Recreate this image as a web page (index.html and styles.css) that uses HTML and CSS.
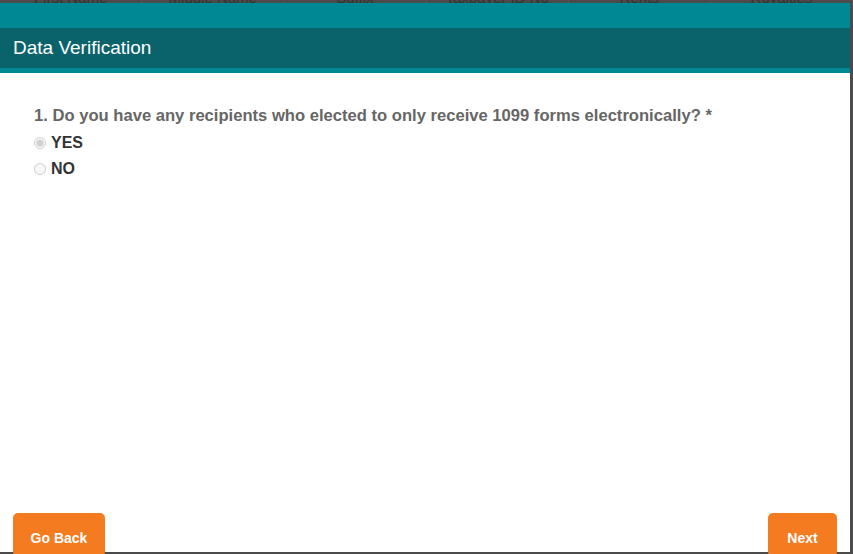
FILE: index.html
```html
<!DOCTYPE html>
<html lang="en">
<head>
  <meta charset="UTF-8">
  <meta name="viewport" content="width=device-width, initial-scale=1.0">
  <title>Data Verification</title>
  <link rel="stylesheet" href="styles.css">
</head>
<body>
  <div class="page">
    <div class="table-head">
      <span>First Name</span>
      <span>Middle Name</span>
      <span>Suffix</span>
      <span>Taxpayer ID No</span>
      <span>Rents</span>
      <span>Royalties</span>
    </div>
  </div>

  <div class="backdrop">
    <div class="modal">
      <div class="modal-top"></div>
      <div class="modal-header">
        <h2>Data Verification</h2>
      </div>
      <div class="modal-body">
        <p class="question">1. Do you have any recipients who elected to only receive 1099 forms electronically? *</p>
        <label class="option">
          <input type="radio" name="electronic" value="yes" checked disabled>
          <span>YES</span>
        </label>
        <label class="option">
          <input type="radio" name="electronic" value="no" disabled>
          <span>NO</span>
        </label>
      </div>
      <div class="modal-footer">
        <button class="btn">Go Back</button>
        <button class="btn">Next</button>
      </div>
    </div>
  </div>
</body>
</html>
```

FILE: styles.css
```css
body {
  margin: 0;
  padding: 0;
  font-family: 'Liberation Sans', Arial, sans-serif;
  background: #4b4b4b;
  overflow: hidden;
}

.page {
  height: 554px;
}

.table-head {
  display: flex;
  margin-top: -11px;
  font-size: 15px;
  color: #333;
}

.table-head span {
  flex: 1;
  text-align: center;
  border-right: 1px solid #555;
}

.backdrop {
  position: fixed;
  top: 3px;
  left: 0;
  width: 850px;
  height: 549px;
}

.modal {
  display: flex;
  flex-direction: column;
  height: 100%;
  background: #ffffff;
}

.modal-top {
  height: 25px;
  background: #008895;
}

.modal-header {
  height: 40px;
  background: #0a636b;
  border-bottom: 5px solid #008895;
  display: flex;
  align-items: center;
  padding: 0 13px;
}

.modal-header h2 {
  margin: 0;
  font-family: 'Liberation Sans', Arial, sans-serif;
  font-weight: normal;
  font-size: 19px;
  color: #ffffff;
}

.modal-body {
  flex: 1;
  padding: 33px 34px 0;
}

.question {
  margin: 0 0 4px;
  font-size: 16.6px;
  font-weight: bold;
  color: #666;
}

.option {
  display: flex;
  align-items: center;
  height: 26px;
  font-size: 16px;
  font-weight: bold;
  color: #333;
}

.option input {
  width: 12px;
  height: 12px;
  margin: 0 5px 0 0;
}

.modal-footer {
  display: flex;
  justify-content: space-between;
  padding: 0 13px 0;
  height: 39px;
}

.btn {
  width: 92px;
  height: 44px;
  border: none;
  border-radius: 5px;
  background: #f47b20;
  color: #ffffff;
  font-family: 'Liberation Sans', Arial, sans-serif;
  font-size: 14px;
  font-weight: bold;
  padding: 6px 0 0;
}

.btn + .btn {
  width: 69px;
}
```
